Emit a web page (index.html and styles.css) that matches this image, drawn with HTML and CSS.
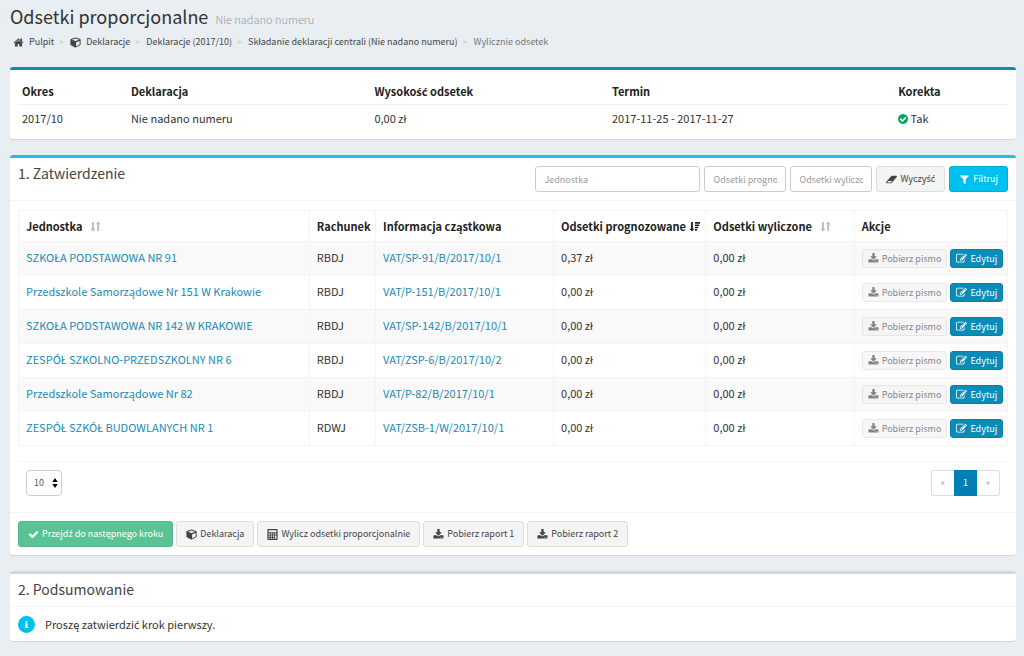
FILE: index.html
```html
<!DOCTYPE html>
<html lang="pl">
<head>
<meta charset="utf-8">
<title>Odsetki proporcjonalne</title>
<link rel="stylesheet" href="styles.css">
</head>
<body>
<svg class="sprite" aria-hidden="true">
  <symbol id="home" viewBox="0 0 1792 1792"><path d="M1472 992v480q0 26-19 45t-45 19h-384v-384h-256v384h-384q-26 0-45-19t-19-45v-480q0-1 .5-3t.5-3l575-474 575 474q1 2 1 6zm223-69l-62 74q-8 9-21 11h-3q-13 0-21-7l-692-577-692 577q-12 8-24 7-13-2-21-11l-62-74q-8-10-7-23.500t11-21.500l719-599q32-26 76-26t76 26l244 204v-195q0-14 9-23t23-9h192q14 0 23 9t9 23v408l219 182q10 8 11 21.500t-7 23.500z"/></symbol>
  <symbol id="cube" viewBox="0 0 1792 1792"><path fill-rule="evenodd" d="M896 64q22 0 44 8l704 256q38 14 61 47t23 73v768q0 35-18 65t-49 47l-704 384q-28 16-61 16t-61-16l-704-384q-31-17-49-47t-18-65V448q0-40 23-73t61-47L852 72q22-8 44-8zM896 240L300 455l596 210 596-210zM1000 1540l570-310V640L1000 850z"/></symbol>
  <symbol id="circle-check" viewBox="128 128 1536 1536"><path d="M1412 734q0-28-18-46l-91-90q-19-19-45-19t-45 19l-408 407-226-226q-19-19-45-19t-45 19l-91 90q-18 18-18 46 0 27 18 45l362 362q19 19 45 19 27 0 46-19l543-543q18-18 18-45zm252 162q0 209-103 385.500t-279.500 279.500-385.500 103-385.500-103-279.500-279.500-103-385.500 103-385.500 279.500-279.500 385.500-103 385.500 103 279.500 279.500 103 385.500z"/></symbol>
  <symbol id="check" viewBox="0 0 1792 1792"><path d="M1671 566q0 40-28 68l-724 724-136 136q-28 28-68 28t-68-28l-136-136-362-362q-28-28-28-68t28-68l136-136q28-28 68-28t68 28l294 295 656-657q28-28 68-28t68 28l136 136q28 28 28 68z"/></symbol>
  <symbol id="filter" viewBox="0 0 1792 1792"><path d="M1595 295q17 41-14 70l-493 493v742q0 42-39 59-13 5-25 5-27 0-45-19l-256-256q-19-19-19-45v-486l-493-493q-31-29-14-70 17-39 59-39h1280q42 0 59 39z"/></symbol>
  <symbol id="eraser" viewBox="0 0 1920 1792"><path fill-rule="evenodd" d="M768 256h1024q38 0 69 20t47 55q15 34 9 71t-31 66l-896 1024q-38 44-96 44H128q-38 0-69-20.500T12 1461q-15-34-9.500-71.500T34 1324L930 300q38-44 96-44zM850 1400l230-264H420l-230 264z"/></symbol>
  <symbol id="download" viewBox="0 0 1792 1792"><path d="M1344 1344q0-26-19-45t-45-19-45 19-19 45 19 45 45 19 45-19 19-45zm256 0q0-26-19-45t-45-19-45 19-19 45 19 45 45 19 45-19 19-45zm128-224v320q0 40-28 68t-68 28h-1472q-40 0-68-28t-28-68v-320q0-40 28-68t68-28h465l135 136q58 56 136 56t136-56l136-136h464q40 0 68 28t28 68zm-325-569q17 41-14 70l-448 448q-18 19-45 19t-45-19l-448-448q-31-29-14-70 17-39 59-39h256v-448q0-26 19-45t45-19h256q26 0 45 19t19 45v448h256q42 0 59 39z"/></symbol>
  <symbol id="edit" viewBox="0 0 1792 1792"><path d="M888 1184l116-116-152-152-116 116v56h96v96h56zm440-720q-16-16-33 1l-350 350q-17 17-1 33t33-1l350-350q17-17 1-33zm80 594v190q0 119-84.500 203.500t-203.500 84.500h-832q-119 0-203.500-84.500t-84.500-203.500v-832q0-119 84.500-203.500t203.500-84.500h832q63 0 117 25 15 7 18 23 3 17-9 29l-49 49q-14 14-32 8-23-6-45-6h-832q-66 0-113 47t-47 113v832q0 66 47 113t113 47h832q66 0 113-47t47-113v-126q0-13 9-22l64-64q15-15 35-7t20 29zm-96-738l288 288-672 672h-288v-288zm444 132l-92 92-288-288 92-92q28-28 68-28t68 28l152 152q28 28 28 68t-28 68z"/></symbol>
  <symbol id="calculator" viewBox="0 0 14 14"><path fill-rule="evenodd" d="M1.500 0h11a1 1 0 0 1 1 1v12a1 1 0 0 1-1 1h-11a1 1 0 0 1-1-1V1a1 1 0 0 1 1-1zM2 1.500v2.500h10V1.500zM2 5.500v1.500h1.700V5.500zm2.800 0v1.500h1.700V5.500zm2.800 0v1.500h1.700V5.500zm2.700 0v1.500H12V5.500zM2 8.300v1.500h1.700V8.300zm2.800 0v1.500h1.700V8.300zm2.800 0v1.500h1.700V8.300zm2.700 0v4.200H12V8.300zM2 11v1.500h1.700V11zm2.800 0v1.500h1.700V11zm2.800 0v1.500h1.700V11z"/></symbol>
  <symbol id="sort" viewBox="0 0 12 12"><path d="M2.200 1h2v7.500H6L3.200 11.500.5 8.500h1.700zM8 11h2V3.500h1.600L9 .5l-2.700 3H8z"/></symbol>
  <symbol id="sort-desc" viewBox="0 0 12 12"><path d="M2.200 1h2v7.500H6L3.200 11.500.5 8.500h1.700zM6.500 1H12v2H6.500zM6.500 3.700h4.700v1.800H6.500zM6.500 6.200h3.500V8H6.500zM6.500 8.700h2.300v1.800H6.500z"/></symbol>
  <symbol id="arrows" viewBox="0 0 6 10"><path d="M3 0l2.700 4H.3zM3 10L.3 6h5.400z"/></symbol>
  <symbol id="info" viewBox="0 0 6 10"><path d="M1.800 0h2.400v2H1.800zM.8 3.300h3.500v4.900h1V10H.8V8.200h1V5h-1z"/></symbol>
</svg>

<main class="page">
  <header class="page-head">
    <h1 class="page-title">Odsetki proporcjonalne <small class="page-sub">Nie nadano numeru</small></h1>
    <nav>
      <ol class="crumbs">
        <li><a href="#"><svg class="icon crumb-icon"><use href="#home"/></svg>Pulpit</a></li>
        <li><a href="#"><svg class="icon crumb-icon"><use href="#cube"/></svg>Deklaracje</a></li>
        <li><a href="#">Deklaracje (2017/10)</a></li>
        <li><a href="#">Składanie deklaracji centrali (Nie nadano numeru)</a></li>
        <li class="current">Wylicznie odsetek</li>
      </ol>
    </nav>
  </header>

  <section class="box box-primary summary">
    <table class="info-table">
      <colgroup><col class="i1"><col class="i2"><col class="i3"><col class="i4"><col></colgroup>
      <thead><tr><th>Okres</th><th>Deklaracja</th><th>Wysoko<span class="alt">ść</span> odsetek</th><th>Termin</th><th>Korekta</th></tr></thead>
      <tbody><tr><td>2017/10</td><td>Nie nadano numeru</td><td>0,00 zł</td><td>2017-11-25 - 2017-11-27</td><td><svg class="icon ok"><use href="#circle-check"/></svg> Tak</td></tr></tbody>
    </table>
  </section>

  <section class="box box-info">
    <header class="box-head">
      <h2 class="box-title">1. Zatwierdzenie</h2>
      <form class="filters">
        <input class="field wide" type="text" placeholder="Jednostka" aria-label="Jednostka">
        <input class="field" type="text" placeholder="Odsetki prognozowane" aria-label="Odsetki prognozowane">
        <input class="field" type="text" placeholder="Odsetki wyliczone" aria-label="Odsetki wyliczone">
        <button class="btn" type="reset"><svg class="icon"><use href="#eraser"/></svg><span>Wyczy<span class="alt">ść</span></span></button>
        <button class="btn btn-info" type="button"><svg class="icon"><use href="#filter"/></svg>Filtruj</button>
      </form>
    </header>
    <div class="table-area">
      <table class="data-table">
        <colgroup><col class="c1"><col class="c2"><col class="c3"><col class="c4"><col class="c5"><col></colgroup>
        <thead>
          <tr>
            <th>Jednostka<svg class="icon sort"><use href="#sort"/></svg></th>
            <th>Rachunek</th>
            <th>Informacja cząstkowa</th>
            <th>Odsetki prognozowane<svg class="icon sort active"><use href="#sort-desc"/></svg></th>
            <th>Odsetki wyliczone<svg class="icon sort"><use href="#sort"/></svg></th>
            <th>Akcje</th>
          </tr>
        </thead>
        <tbody>
          <tr><td><a href="#">SZKOŁA PODSTAWOWA NR 91</a></td><td>RBDJ</td><td><a href="#">VAT/SP-91/B/2017/10/1</a></td><td>0,37 zł</td><td>0,00 zł</td><td><div class="actions"><button class="btn btn-xs" disabled><svg class="icon"><use href="#download"/></svg>Pobierz pismo</button><button class="btn btn-xs btn-primary"><svg class="icon"><use href="#edit"/></svg>Edytuj</button></div></td></tr>
          <tr><td><a href="#">Przedszkole Samorządowe Nr 151 W Krakowie</a></td><td>RBDJ</td><td><a href="#">VAT/P-151/B/2017/10/1</a></td><td>0,00 zł</td><td>0,00 zł</td><td><div class="actions"><button class="btn btn-xs" disabled><svg class="icon"><use href="#download"/></svg>Pobierz pismo</button><button class="btn btn-xs btn-primary"><svg class="icon"><use href="#edit"/></svg>Edytuj</button></div></td></tr>
          <tr><td><a href="#">SZKOŁA PODSTAWOWA NR 142 W KRAKOWIE</a></td><td>RBDJ</td><td><a href="#">VAT/SP-142/B/2017/10/1</a></td><td>0,00 zł</td><td>0,00 zł</td><td><div class="actions"><button class="btn btn-xs" disabled><svg class="icon"><use href="#download"/></svg>Pobierz pismo</button><button class="btn btn-xs btn-primary"><svg class="icon"><use href="#edit"/></svg>Edytuj</button></div></td></tr>
          <tr><td><a href="#">ZESPÓŁ SZKOLNO-PRZEDSZKOLNY NR 6</a></td><td>RBDJ</td><td><a href="#">VAT/ZSP-6/B/2017/10/2</a></td><td>0,00 zł</td><td>0,00 zł</td><td><div class="actions"><button class="btn btn-xs" disabled><svg class="icon"><use href="#download"/></svg>Pobierz pismo</button><button class="btn btn-xs btn-primary"><svg class="icon"><use href="#edit"/></svg>Edytuj</button></div></td></tr>
          <tr><td><a href="#">Przedszkole Samorządowe Nr 82</a></td><td>RBDJ</td><td><a href="#">VAT/P-82/B/2017/10/1</a></td><td>0,00 zł</td><td>0,00 zł</td><td><div class="actions"><button class="btn btn-xs" disabled><svg class="icon"><use href="#download"/></svg>Pobierz pismo</button><button class="btn btn-xs btn-primary"><svg class="icon"><use href="#edit"/></svg>Edytuj</button></div></td></tr>
          <tr><td><a href="#">ZESPÓŁ SZKÓŁ BUDOWLANYCH NR 1</a></td><td>RDWJ</td><td><a href="#">VAT/ZSB-1/W/2017/10/1</a></td><td>0,00 zł</td><td>0,00 zł</td><td><div class="actions"><button class="btn btn-xs" disabled><svg class="icon"><use href="#download"/></svg>Pobierz pismo</button><button class="btn btn-xs btn-primary"><svg class="icon"><use href="#edit"/></svg>Edytuj</button></div></td></tr>
        </tbody>
      </table>
      <div class="table-foot">
        <div class="page-size">
          <select class="size-select" aria-label="Liczba wierszy"><option>10</option></select>
          <svg class="size-arrows"><use href="#arrows"/></svg>
        </div>
        <nav class="pager" aria-label="Strony"><a href="#" class="dim">«</a><a href="#" class="on">1</a><a href="#" class="dim">»</a></nav>
      </div>
    </div>
    <footer class="box-foot">
      <button class="btn btn-success" disabled><svg class="icon"><use href="#check"/></svg><span>Przejd<span class="alt">ź</span> do następnego kroku</span></button>
      <button class="btn"><svg class="icon"><use href="#cube"/></svg>Deklaracja</button>
      <button class="btn"><svg class="icon"><use href="#calculator"/></svg>Wylicz odsetki proporcjonalnie</button>
      <button class="btn"><svg class="icon"><use href="#download"/></svg>Pobierz raport 1</button>
      <button class="btn"><svg class="icon"><use href="#download"/></svg>Pobierz raport 2</button>
    </footer>
  </section>

  <section class="box">
    <header class="box-head compact"><h2 class="box-title">2. Podsumowanie</h2></header>
    <p class="notice"><span class="badge"><svg class="badge-icon"><use href="#info"/></svg></span><span>Proszę zatwierdzi<span class="alt">ć</span> krok pierwszy.</span></p>
  </section>
</main>
</body>
</html>
```
FILE: styles.css
```css
* { box-sizing: border-box; }
body {
  margin: 0;
  background: #e9eef2;
  color: #333;
  font-family: "Source Sans Pro", "Noto Sans CJK SC", "Noto Sans", sans-serif;
  font-size: 11px;
  line-height: 18px;
}
button, input, select { font: inherit; color: inherit; }
a { color: #1a8ab5; text-decoration: none; }
h1, h2, p, ol { margin: 0; padding: 0; font-weight: 400; }
.sprite { display: none; }
.icon { width: 11px; height: 11px; fill: currentColor; flex: none; }
.alt { font-family: "Noto Sans", sans-serif; line-height: 1; }

.page { padding: 4px 8px 14px 10px; }
.page-title { font-size: 18px; line-height: 24px; }
.page-sub { margin-left: 3px; font-size: 11px; color: #999; font-weight: 300; }
.crumbs { display: flex; list-style: none; padding: 3px 3px 5px; font-size: 9px; line-height: 16px; }
.crumbs li { display: flex; align-items: center; }
.crumbs li + li::before { content: ">"; width: 11px; padding-left: 5px; color: #bbb; font-size: 8px; }
.crumbs a { display: flex; align-items: center; color: #444; }
.crumbs .current { color: #777; }
.crumb-icon { margin-right: 5px; }

.box {
  margin-top: 16px;
  background: #fff;
  border-top: 3px solid #d2d6de;
  border-radius: 3px;
  box-shadow: 0 1px 1px rgba(0, 0, 0, .1);
}
.page-head + .box { margin-top: 12px; }
.box-primary { border-top-color: #0a8cb3; }
.box-info { border-top-color: #1fbfe2; }
.box-head {
  display: flex;
  justify-content: space-between;
  align-items: flex-start;
  padding: 8px;
  border-bottom: 1px solid #f4f4f4;
}
.box-head.compact { padding-bottom: 10px; }
.box-title { font-size: 14px; line-height: 14px; color: #444; }

.summary { padding: 8px; }
table { width: 100%; border-collapse: collapse; table-layout: fixed; }
th { text-align: left; font-weight: 700; color: #222; }
.info-table th { padding: 4px; border-bottom: 1px solid #f0f0f0; }
.info-table td { padding: 4px; }
.i1 { width: 11%; }
.i2 { width: 24.6%; }
.i3 { width: 24%; }
.i4 { width: 28.9%; }
.ok { width: 10px; height: 10px; vertical-align: -1px; color: #00a65a; }

.filters { display: flex; gap: 4px; }
.field {
  width: 82px;
  height: 26px;
  padding: 0 8px;
  border: 1px solid #ccc;
  border-radius: 3px;
  font-size: 9px;
}
.field.wide { width: 165px; }
.field::placeholder { color: #999; opacity: 1; }
.btn {
  display: inline-flex;
  align-items: center;
  gap: 3px;
  height: 26px;
  padding: 0 9px;
  border: 1px solid #ddd;
  border-radius: 3px;
  background: #f4f4f4;
  color: #444;
  font-size: 9px;
  white-space: nowrap;
}
.btn:disabled { opacity: .65; }
.btn-info { background: #00c0ef; border-color: #00acd6; color: #fff; }
.btn-success { background: #00a65a; border-color: #008d4c; color: #fff; }
.btn-xs { height: 19px; padding: 0 5px; }
.btn-primary { background: #0a8cb8; border-color: #0a7fa8; color: #fff; }

.table-area { padding: 9px 8px; }
.data-table th, .data-table td { padding: 6px 7px 9px; border: 1px solid #f4f4f4; white-space: nowrap; vertical-align: top; }
.data-table th { padding: 6px 7px; }
.data-table td:last-child { padding: 7px; }
.data-table tbody tr:nth-child(odd) { background: #f9f9f9; }
.c1 { width: 29.4%; }
.c2 { width: 6.7%; }
.c3 { width: 18%; }
.c4 { width: 15.4%; }
.c5 { width: 15%; }
.sort { margin-left: 8px; vertical-align: -1px; color: #bbb; }
.sort.active { margin-left: 3px; color: #222; }
.actions { display: flex; gap: 3px; }

.table-foot {
  display: flex;
  justify-content: space-between;
  margin-top: 15px;
  padding: 8px 8px 7px;
  border-top: 1px solid #f4f4f4;
}
.page-size { position: relative; }
.size-select {
  appearance: none;
  width: 36px;
  height: 26px;
  padding: 0 7px;
  border: 1px solid #ccc;
  border-radius: 4px;
  background: #fff;
  color: #555;
  font-size: 9px;
}
.size-arrows { position: absolute; right: 4px; top: 8px; width: 6px; height: 10px; pointer-events: none; }
.pager { display: flex; font-size: 9px; line-height: 24px; text-align: center; }
.pager a { width: 23px; border: 1px solid #ddd; }
.pager .dim { color: #999; }
.pager .dim:first-child { border-right: 0; border-radius: 3px 0 0 3px; }
.pager .dim:last-child { border-left: 0; border-radius: 0 3px 3px 0; }
.pager .on { background: #007fb5; border-color: #007fb5; color: #fff; }
.box-foot { display: flex; gap: 3px; padding: 8px; border-top: 1px solid #f4f4f4; }

.notice { display: flex; align-items: center; gap: 10px; padding: 8px; }
.badge { display: grid; place-items: center; width: 17px; height: 17px; border-radius: 50%; background: #00c0ef; }
.badge-icon { width: 5px; height: 7px; fill: #fff; }
```
